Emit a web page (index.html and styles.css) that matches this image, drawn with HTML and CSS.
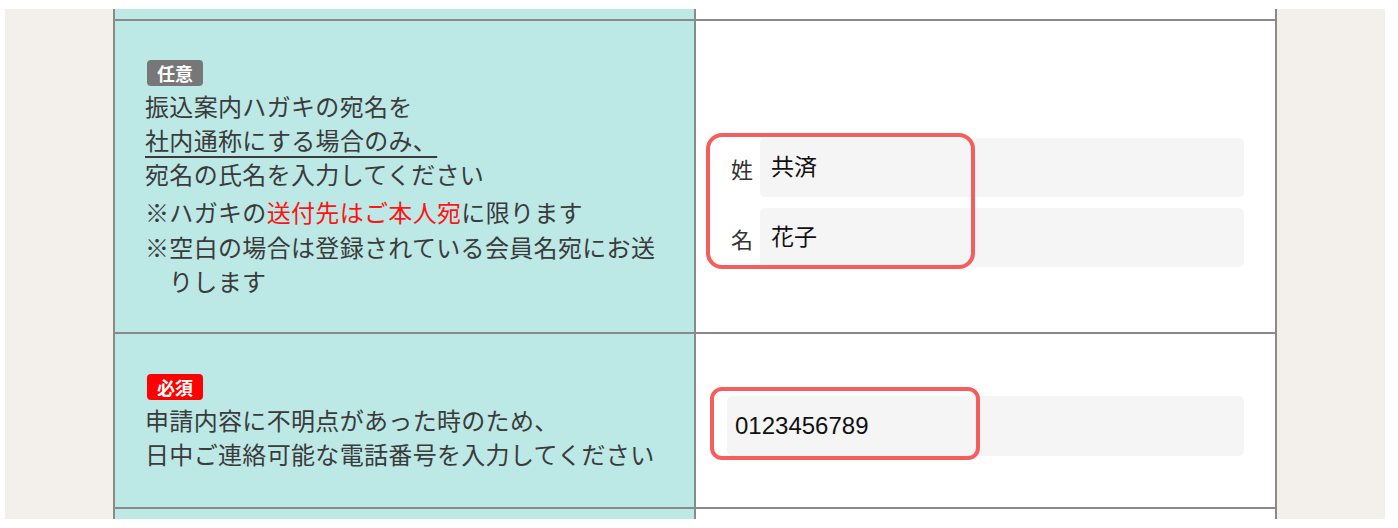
FILE: index.html
```html
<!DOCTYPE html>
<html lang="ja">
<head>
<meta charset="utf-8">
<title>フォーム</title>
<link rel="stylesheet" href="styles.css">
</head>
<body>
<div class="frame">
  <div class="form-table">
    <div class="row row-top">
      <div class="head"></div>
      <div class="data"></div>
    </div>

    <div class="row row-name">
      <div class="head">
        <span class="badge badge-optional">任意</span>
        <p class="desc">振込案内ハガキの宛名を<br><span class="ul">社内通称にする場合のみ、</span><br>宛名の氏名を入力してください</p>
        <ul class="notes">
          <li>※ハガキの<span class="red">送付先はご本人宛</span>に限ります</li>
          <li>※空白の場合は登録されている会員名宛にお送りします</li>
        </ul>
      </div>
      <div class="data data-name">
        <div class="name-field">
          <span class="field-label">姓</span>
          <input class="text-input" type="text" value="共済" readonly>
        </div>
        <div class="name-field">
          <span class="field-label">名</span>
          <input class="text-input" type="text" value="花子" readonly>
        </div>
        <div class="highlight highlight-name"></div>
      </div>
    </div>

    <div class="row row-tel">
      <div class="head">
        <span class="badge badge-required">必須</span>
        <p class="desc">申請内容に不明点があった時のため、<br>日中ご連絡可能な電話番号を入力してください</p>
      </div>
      <div class="data data-tel">
        <input class="text-input tel-input" type="text" value="0123456789" readonly>
        <div class="highlight highlight-tel"></div>
      </div>
    </div>

    <div class="row row-bottom">
      <div class="head"></div>
      <div class="data"></div>
    </div>
  </div>
</div>
</body>
</html>
```

FILE: styles.css
```css
* { box-sizing: border-box; }

html, body {
  margin: 0;
  padding: 0;
  background: #ffffff;
}

body {
  font-family: "Noto Sans CJK JP", "Noto Sans", sans-serif;
  color: #3b3b3b;
}

.frame {
  margin: 9px 13px 0 5px;
  height: 510px;
  background: #f3f0eb;
  overflow: hidden;
  display: flex;
  justify-content: center;
}

.form-table {
  width: 1164px;
  border-left: 2px solid #8a8a8a;
  border-right: 2px solid #8a8a8a;
  display: flex;
  flex-direction: column;
}

.row {
  display: grid;
  grid-template-columns: 581px 579px;
  border-bottom: 2px solid #8a8a8a;
}

.head {
  background: #bce8e5;
  border-right: 2px solid #8a8a8a;
}

.data {
  background: #ffffff;
  position: relative;
}

.row-top { height: 12px; }
.row-name { height: 313px; }
.row-tel { height: 175px; }
.row-bottom { flex: 1; border-bottom: none; }

.row-name .head { padding: 39px 20px 0 30px; }
.row-tel .head { padding: 40px 20px 0 30px; }

.badge {
  display: inline-block;
  width: 56px;
  height: 26px;
  margin-left: 2px;
  border-radius: 4px;
  color: #ffffff;
  font-size: 18px;
  font-weight: bold;
  line-height: 26px;
  text-align: center;
  vertical-align: top;
}

.badge-optional { background: #777777; }
.badge-required { background: #ff0000; }

.desc {
  margin: 3px 0 0 0;
  font-size: 24px;
  line-height: 34px;
  letter-spacing: 0.33px;
}

.ul {
  text-decoration: underline;
  text-decoration-thickness: 1.5px;
  text-underline-offset: 6px;
}

.notes {
  list-style: none;
  margin: 4px 0 0 0;
  padding: 0;
  width: 519px;
  font-size: 24px;
  line-height: 34.5px;
  letter-spacing: 0.33px;
}

.notes li {
  padding-left: 1em;
  text-indent: -1em;
}

.red { color: #ff1414; }

.data-name { padding: 117px 31px 0 35px; }

.name-field {
  display: flex;
  align-items: center;
  margin-bottom: 11px;
}

.field-label {
  width: 29px;
  font-size: 22px;
  color: #333333;
}

.text-input {
  flex: 1;
  height: 59px;
  border: none;
  border-radius: 5px;
  background: #f5f5f5;
  padding: 0 11px 5px 11px;
  font-family: "Noto Sans CJK JP", "Noto Sans", sans-serif;
  font-size: 23px;
  color: #111111;
  outline: none;
}

.data-tel { padding: 62px 31px 0 31px; }

.tel-input {
  width: 100%;
  height: 60px;
  padding: 0 8px 1px 8px;
  font-family: "Liberation Sans", Arial, sans-serif;
  font-size: 24px;
}

.highlight {
  position: absolute;
  border: 4px solid #f65e5e;
  border-radius: 16px;
  pointer-events: none;
}

.highlight-name {
  left: 10px;
  top: 112px;
  width: 269px;
  height: 136px;
}

.highlight-tel {
  left: 14px;
  top: 53px;
  width: 270px;
  height: 73px;
  border-radius: 12px;
}
```
